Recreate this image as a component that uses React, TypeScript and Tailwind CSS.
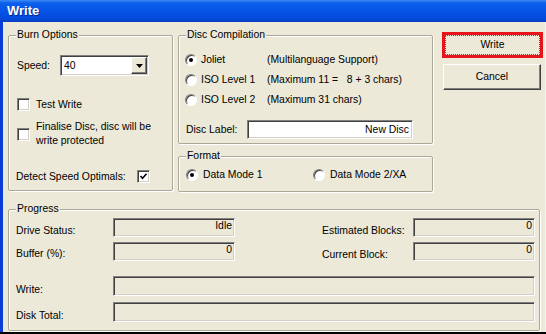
const sunken =
  "border border-t-[#808080] border-l-[#808080] border-b-white border-r-white shadow-[inset_1px_1px_0_#404040,inset_-1px_-1px_0_#d4d0c8]";

function Group({ title, className, children }: { title: string; className: string; children?: any }) {
  return (
    <div className={`relative shrink-0 border border-[#aca899] rounded-[2px] shadow-[inset_1px_1px_0_#fff,1px_1px_0_#fff] ${className}`}>
      <span className="absolute -top-[7px] left-[7px] bg-[#ece9d8] px-[1px] leading-[12px] whitespace-nowrap">{title}</span>
      {children}
    </div>
  );
}

function Check({ checked }: { checked?: boolean }) {
  return (
    <span className={`${sunken} w-[13px] h-[13px] bg-white shrink-0 flex items-center justify-center`}>
      {checked && (
        <svg width="9" height="9" viewBox="0 0 9 9">
          <path d="M1.5 4 L3.5 6.2 L7.5 1.8" fill="none" stroke="#000" strokeWidth="1.6" />
        </svg>
      )}
    </span>
  );
}

function Radio({ checked }: { checked?: boolean }) {
  return (
    <span className="w-[12px] h-[12px] rounded-full bg-white border border-t-[#808080] border-l-[#808080] border-r-white border-b-white shadow-[inset_1px_1px_0_#404040] shrink-0 flex items-center justify-center">
      {checked && <span className="w-[4px] h-[4px] rounded-full bg-black" />}
    </span>
  );
}

function Field({ className, value }: { className: string; value?: string }) {
  return (
    <div className={`${sunken} bg-[#ece9d8] text-right pr-[2px] leading-[13px] shrink-0 ${className}`}>{value}</div>
  );
}

export default function App() {
  return (
    <div className="w-[546px] h-[334px] flex flex-col bg-black overflow-hidden font-['Liberation_Sans',Arial,sans-serif] text-[10.4px] text-black">
      <div className="h-[22px] shrink-0 flex items-center pl-[7px] text-white font-bold text-[13px] bg-[linear-gradient(180deg,#3d8bf7_0%,#0b5eeb_14%,#0553e6_55%,#0348d6_90%,#0a3bb8_100%)] [text-shadow:1px_1px_0_#0a2a8f]">
        Write
      </div>
      <div className="h-[310px] shrink-0 bg-[#ece9d8] border-l-[3px] border-l-[#0b3ed8] border-r border-r-[#f6f5ee] pl-[5px] pt-[13px] flex flex-col">
        <div className="flex items-start">
          <Group title="Burn Options" className="w-[165px] h-[156px]">
            <div className="flex flex-col pl-[8px] pt-[19px]">
              <div className="flex items-center h-[21px]">
                <span className="w-[43px]">Speed:</span>
                <div className={`${sunken} w-[89px] h-[21px] bg-white flex items-center justify-between`}>
                  <span className="pl-[3px]">40</span>
                  <span className="w-[16px] h-[17px] mr-[1px] bg-[#ece9d8] border border-t-white border-l-white border-b-[#404040] border-r-[#404040] shadow-[inset_-1px_-1px_0_#808080] flex items-center justify-center">
                    <svg width="7" height="4" viewBox="0 0 7 4">
                      <polygon points="0,0 7,0 3.5,4" fill="#000" />
                    </svg>
                  </span>
                </div>
              </div>
              <div className="flex items-center gap-[6px] h-[13px] mt-[22px]">
                <Check />
                <span>Test Write</span>
              </div>
              <div className="flex items-center gap-[6px] mt-[9px]">
                <Check />
                <span className="leading-[14px]">
                  Finalise Disc, disc will be
                  <br />
                  write protected
                </span>
              </div>
              <div className="flex items-center h-[13px] mt-[22px]">
                <span className="w-[121px] -ml-[1px]">Detect Speed Optimals:</span>
                <Check checked />
              </div>
            </div>
          </Group>

          <div className="flex flex-col ml-[5px]">
            <Group title="Disc Compilation" className="w-[255px] h-[109px]">
              <div className="flex flex-col pl-[6px] pt-[14px]">
                {[
                  ["Joliet", "(Multilanguage Support)", true],
                  ["ISO Level 1", "(Maximum 11 =   8 + 3 chars)", false],
                  ["ISO Level 2", "(Maximum 31 chars)", false],
                ].map(([name, desc, on]) => (
                  <div key={name as string} className="flex items-center h-[20px]">
                    <Radio checked={on as boolean} />
                    <span className="w-[66px] ml-[4px] whitespace-nowrap">{name}</span>
                    <span className="whitespace-pre">{desc}</span>
                  </div>
                ))}
                <div className="flex items-center mt-[10px]">
                  <span className="w-[61px] ml-[1px]">Disc Label:</span>
                  <div className={`${sunken} w-[166px] h-[19px] bg-white text-right pr-[3px] leading-[17px]`}>New Disc</div>
                </div>
              </div>
            </Group>
            <Group title="Format" className="w-[255px] h-[36px] mt-[12px]">
              <div className="flex items-center h-[20px] mt-[8px] pl-[7px]">
                <Radio checked />
                <span className="w-[110px] ml-[5px]">Data Mode 1</span>
                <Radio />
                <span className="ml-[5px]">Data Mode 2/XA</span>
              </div>
            </Group>
          </div>

          <div className="flex flex-col ml-[9px] -mt-[3px]">
            <div className="w-[101px] h-[26px] border-[3px] border-[#e8141c] bg-[#ece9d8]">
              <div className="h-full border border-dotted border-[#555] flex items-center justify-center">Write</div>
            </div>
            <div className="w-[98px] h-[26px] mt-[6px] ml-[1px] border border-t-white border-l-white border-b-[#404040] border-r-[#404040] shadow-[inset_-1px_-1px_0_#808080] flex items-center justify-center">
              Cancel
            </div>
          </div>
        </div>

        <Group title="Progress" className="w-[532px] h-[122px] mt-[17px]">
          <div className="flex flex-col pl-[7px] pt-[8px]">
            <div className="flex items-end">
              <span className="w-[97px] leading-[12px]">Drive Status:</span>
              <Field className="w-[122px] h-[19px]" value="Idle" />
              <span className="w-[91px] ml-[87px] leading-[12px]">Estimated Blocks:</span>
              <Field className="w-[122px] h-[19px]" value="0" />
            </div>
            <div className="flex items-end mt-[5px]">
              <span className="w-[97px] leading-[12px] mb-[1px]">Buffer (%):</span>
              <Field className="w-[122px] h-[19px]" value="0" />
              <span className="w-[91px] ml-[87px] leading-[12px]">Current Block:</span>
              <Field className="w-[122px] h-[19px]" value="0" />
            </div>
            <div className="flex items-end mt-[15px]">
              <span className="w-[97px] leading-[12px]">Write:</span>
              <Field className="w-[422px] h-[20px]" />
            </div>
            <div className="flex items-end mt-[6px]">
              <span className="w-[97px] leading-[12px]">Disk Total:</span>
              <Field className="w-[422px] h-[20px]" />
            </div>
          </div>
        </Group>
      </div>
    </div>
  );
}
